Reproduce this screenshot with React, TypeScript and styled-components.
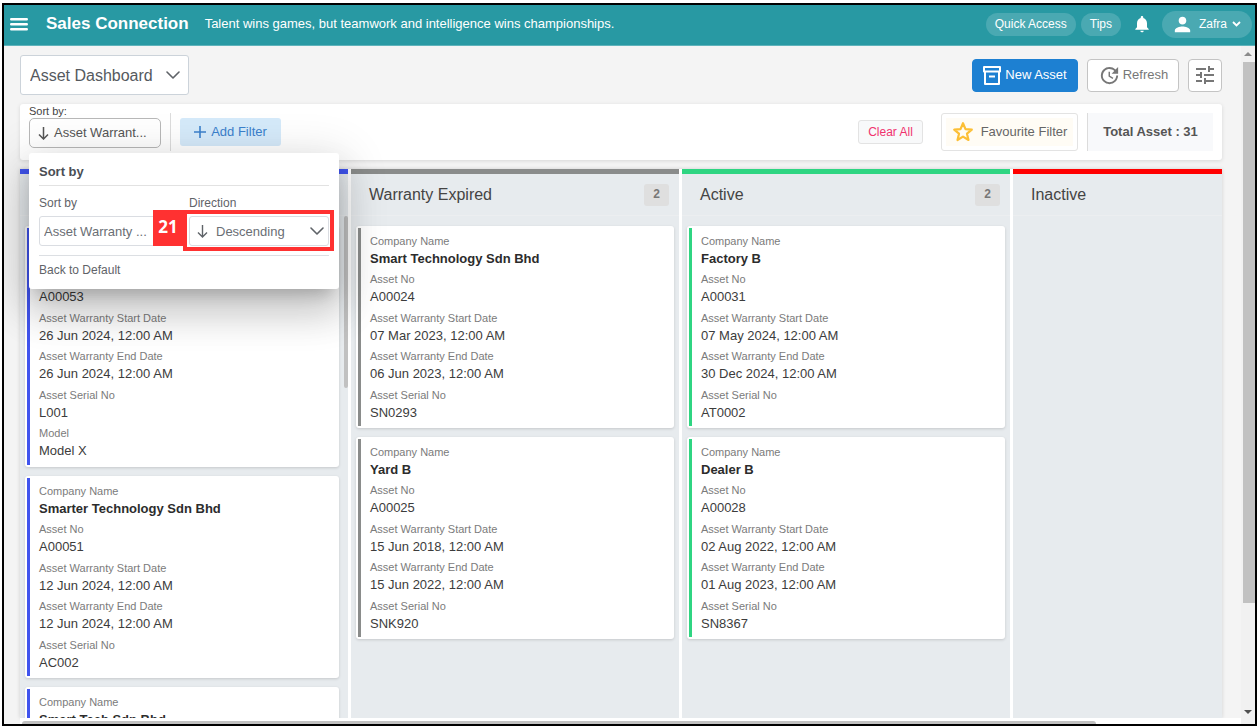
import React from "react";
import styled, { createGlobalStyle } from "styled-components";
import { MdNotifications, MdPerson, MdTune, MdUpdate } from "react-icons/md";

const GlobalStyle = createGlobalStyle`
  * { box-sizing: border-box; }
  body {
    margin: 0;
    background: #fff;
    font-family: "Liberation Sans", Arial, sans-serif;
    color: #444;
  }
  button, select { font: inherit; color: inherit; cursor: pointer; margin: 0; }
  h1, h2, h3, p, dl, dt, dd, ul { margin: 0; padding: 0; font-weight: normal; }
`;

const Page = styled.div`
  height: 100vh;
  padding: 3px 1px 1px 2px;
`;

const Frame = styled.div`
  height: 100%;
  border: 2px solid #000;
  display: flex;
  flex-direction: column;
  overflow: hidden;
  background: #f4f4f4;
`;

const Header = styled.header`
  flex: none;
  height: 41px;
  padding: 0 3px 2px 5px;
  display: flex;
  align-items: center;
  background: #2899a3;
  border-bottom: 1px solid #5fb3bb;
  color: #fff;
`;

const MenuButton = styled.button`
  width: 20px;
  height: 20px;
  padding: 0;
  border: 0;
  background: none;
  display: flex;
  align-items: center;
  justify-content: center;
`;

const Brand = styled.h1`
  margin-left: 17px;
  font-size: 17px;
  line-height: 24px;
  font-weight: bold;
`;

const Quote = styled.p`
  margin-left: 16px;
  flex: 1;
  font-size: 13px;
  line-height: 20px;
`;

const Pill = styled.button`
  height: 23px;
  margin-left: 5px;
  padding: 0 9px;
  border: 0;
  border-radius: 12px;
  background: #4aa9b2;
  color: #fff;
  font-size: 12px;
  line-height: 16px;
`;

const BellButton = styled.button`
  margin: 0 10px 0 11px;
  padding: 0;
  width: 20px;
  height: 24px;
  border: 0;
  background: none;
  color: #fff;
  display: flex;
  align-items: center;
  justify-content: center;
`;

const UserButton = styled.button`
  height: 27px;
  padding: 0 11px 0 9px;
  border: 0;
  border-radius: 14px;
  background: #4aa9b2;
  color: #fff;
  font-size: 12px;
  line-height: 16px;
  display: flex;
  align-items: center;
  gap: 5px;
`;

const Body = styled.div`
  flex: 1;
  min-height: 0;
  display: flex;
`;

const Main = styled.main`
  flex: 1;
  min-width: 0;
  padding: 9px 0 0 16px;
  display: flex;
  flex-direction: column;
`;

const Toolbar = styled.div`
  margin-right: 19px;
  display: flex;
  align-items: center;
  gap: 9px;
`;

const Spacer = styled.div`
  flex: 1;
`;

const SelectBox = styled.div`
  position: relative;
  display: flex;
  align-items: center;
  color: #5f6368;
  > svg { position: absolute; pointer-events: none; }
`;

const Chevron = styled.svg<{ $right: number }>`
  right: ${(p) => p.$right}px;
`;

const LeadArrow = styled.svg`
  left: 8px;
`;

const BoardSelect = styled.select`
  appearance: none;
  width: 169px;
  height: 40px;
  padding: 0 30px 0 9px;
  border: 1px solid #ccd3da;
  border-radius: 3px;
  background: #fff;
  color: #55595e;
  font-size: 16px;
`;

const ToolButton = styled.button<{ $primary?: boolean; $square?: boolean }>`
  height: 33px;
  width: ${(p) => (p.$square ? 34 : p.$primary ? 106 : 92)}px;
  padding: 0;
  border: 1px solid ${(p) => (p.$primary ? "#1d80d2" : "#c4c4c4")};
  border-radius: 4px;
  background: ${(p) => (p.$primary ? "#1d80d2" : "#fff")};
  color: ${(p) => (p.$primary ? "#fff" : "#777")};
  font-size: 13px;
  line-height: 20px;
  display: flex;
  align-items: center;
  justify-content: center;
  gap: ${(p) => (p.$primary ? 4 : 2)}px;
`;

const FilterBar = styled.div`
  position: relative;
  margin: 9px 19px 0 0;
  height: 56px;
  padding: 0 9px;
  display: flex;
  align-items: center;
  background: #fff;
  border-radius: 3px;
  box-shadow: 0 1px 4px rgba(0, 0, 0, 0.12);
`;

const SortGroup = styled.div`
  display: flex;
  flex-direction: column;
  padding-bottom: 12px;
`;

const SortCaption = styled.span`
  font-size: 11px;
  line-height: 14px;
`;

const SortButton = styled.button`
  width: 132px;
  height: 30px;
  padding: 0 0 0 8px;
  border: 1px solid #b8b8b8;
  border-radius: 5px;
  background: #fff;
  color: #555;
  font-size: 13px;
  line-height: 20px;
  display: flex;
  align-items: center;
  gap: 5px;
`;

const Divider = styled.div`
  width: 1px;
  height: 38px;
  margin: 0 9px;
  background: #dcdcdc;
`;

const AddFilter = styled.button`
  width: 101px;
  height: 28px;
  padding: 0;
  border: 0;
  border-radius: 3px;
  background: #d5eafa;
  color: #3b80cc;
  font-size: 13px;
  line-height: 20px;
  display: flex;
  align-items: center;
  justify-content: center;
  gap: 5px;
`;

const ClearButton = styled.button`
  width: 65px;
  height: 24px;
  padding: 0;
  border: 1px solid #e3e3e3;
  border-radius: 3px;
  background: #f8f9fa;
  color: #f0326e;
  font-size: 12px;
`;

const FavouriteButton = styled.button`
  width: 137px;
  height: 38px;
  margin: 0 9px 0 18px;
  padding: 0 3px;
  border: 1px solid #e3e3e3;
  border-radius: 3px;
  background: #fffcf5;
  color: #666;
  box-shadow: inset 0 0 0 4px #fff;
  font-size: 13px;
  line-height: 20px;
  display: flex;
  align-items: center;
  justify-content: center;
  gap: 7px;
`;

const Total = styled.div`
  width: 126px;
  height: 38px;
  border-left: 1px solid #dcdcdc;
  background: #f8f9fb;
  color: #555;
  font-size: 13px;
  line-height: 38px;
  font-weight: bold;
  text-align: center;
`;

const Popup = styled.section`
  position: absolute;
  z-index: 2;
  top: 49px;
  left: 9px;
  width: 310px;
  height: 136px;
  padding: 8px 10px;
  border-radius: 3px;
  background: #fff;
  color: #5f6368;
  font-size: 12px;
  box-shadow: 0 11px 15px -7px rgba(0, 0, 0, 0.2),
    0 24px 38px 3px rgba(0, 0, 0, 0.14), 0 9px 46px 8px rgba(0, 0, 0, 0.12);
`;

const PopupTitle = styled.h2`
  padding-bottom: 3px;
  border-bottom: 1px solid #e2e2e2;
  color: #4a4e54;
  font-size: 13px;
  line-height: 21px;
  font-weight: bold;
`;

const PopupRow = styled.div`
  display: flex;
  gap: 10px;
  padding: 9px 0;
  border-bottom: 1px solid #dcdfe3;
`;

const PopupField = styled.div`
  width: 140px;
  > label { display: block; line-height: 16px; margin-bottom: 5px; }
`;

const PopupSelect = styled.select<{ $icon?: boolean }>`
  appearance: none;
  width: 100%;
  height: 30px;
  padding: 0 0 0 ${(p) => (p.$icon ? 26 : 4)}px;
  border: 1px solid #dadde2;
  border-radius: 3px;
  background: #fff;
  color: #6a6e74;
  font-size: 13px;
`;

const BackButton = styled.button`
  display: block;
  padding: 0;
  margin-top: 6px;
  border: 0;
  background: none;
  font-size: 12px;
  line-height: 16px;
`;

const CalloutFrame = styled.div`
  position: absolute;
  top: 57px;
  right: 5px;
  width: 151px;
  height: 41px;
  border: 4px solid #ff3131;
  pointer-events: none;
`;

const CalloutNumber = styled.div`
  position: absolute;
  top: 57px;
  left: 124px;
  width: 30px;
  height: 36px;
  background: #ff3131;
  color: #fff;
  font-family: "Open Sans", sans-serif;
  font-size: 17px;
  line-height: 34px;
  font-weight: bold;
  text-align: center;
`;

const Board = styled.div`
  flex: 1;
  min-height: 0;
  margin: 9px 19px 0 0;
  display: flex;
  gap: 3px;
  overflow: hidden;
  background: #fff;
  box-shadow: 0 0 4px rgba(0, 0, 0, 0.15);
`;

const Column = styled.section<{ $accent: string }>`
  flex: 0 0 328px;
  border-top: 5px solid ${(p) => p.$accent};
  background: #e7ebee;
  display: flex;
  flex-direction: column;
`;

const ColumnHead = styled.div`
  flex: none;
  height: 42px;
  padding: 0 10px 0 18px;
  border-bottom: 1px solid #eceef0;
  display: flex;
  align-items: center;
  justify-content: space-between;
`;

const ColumnTitle = styled.h2`
  font-size: 16px;
  line-height: 22px;
`;

const Count = styled.span`
  width: 25px;
  height: 22px;
  border-radius: 3px;
  background: #dfdfdf;
  color: #777;
  font-size: 12px;
  line-height: 20px;
  font-weight: bold;
  text-align: center;
`;

const ColumnBody = styled.div`
  flex: 1;
  min-height: 0;
  display: flex;
`;

const CardList = styled.div`
  flex: 1;
  min-width: 0;
  padding: 10px 5px 0;
  overflow: hidden;
  display: flex;
  flex-direction: column;
  gap: 9px;
`;

const ColumnThumb = styled.div`
  width: 4px;
  height: 172px;
  border-radius: 2px;
  background: #c1c1c1;
`;

const Card = styled.article<{ $accent: string }>`
  flex: none;
  padding: 2px;
  border-radius: 3px;
  background: #fff;
  box-shadow: 0 1px 3px rgba(0, 0, 0, 0.15);
  > dl { border-left: 3px solid ${(p) => p.$accent}; padding: 4px 0 2px 9px; }
`;

const Field = styled.div`
  padding-bottom: 2px;
  &:nth-child(even) { padding-bottom: 3px; }
`;

const FieldLabel = styled.dt`
  min-height: 18px;
  font-size: 11px;
  line-height: 18px;
  color: #7b7b7b;
`;

const FieldValue = styled.dd<{ $strong: boolean }>`
  min-height: 18px;
  font-size: 13px;
  line-height: 18px;
  color: ${(p) => (p.$strong ? "#2c2c2c" : "#3c3c3c")};
  font-weight: ${(p) => (p.$strong ? "bold" : "normal")};
`;

const HScroll = styled.div`
  flex: none;
  height: 6px;
  padding-top: 3px;
  background: #fff;
`;

const HThumb = styled.div`
  width: 88%;
  height: 3px;
  margin-left: 2px;
  border-radius: 3px 3px 0 0;
  background: #c1c1c1;
`;

const PageScroll = styled.div`
  width: 14px;
  padding: 6px 0 10px;
  display: flex;
  flex-direction: column;
  align-items: center;
  background: #f1f1f1;
`;

const PageThumb = styled.div`
  width: 12px;
  height: 541px;
  margin: 6px 0 auto;
  align-self: flex-end;
  background: #c1c1c1;
`;

type Row = [string, string];
interface ColumnData {
  title: string;
  accent: string;
  count?: number;
  scroll?: boolean;
  cards: Row[][];
}

const asset = (company: string, no: string, start: string, end: string, serial: string): Row[] => [
  ["Company Name", company],
  ["Asset No", no],
  ["Asset Warranty Start Date", start],
  ["Asset Warranty End Date", end],
  ["Asset Serial No", serial],
];

const columns: ColumnData[] = [
  {
    title: "",
    accent: "#4054ee",
    scroll: true,
    cards: [
      [
        ["", ""],
        ["", "A00053"],
        ["Asset Warranty Start Date", "26 Jun 2024, 12:00 AM"],
        ["Asset Warranty End Date", "26 Jun 2024, 12:00 AM"],
        ["Asset Serial No", "L001"],
        ["Model", "Model X"],
      ],
      asset("Smarter Technology Sdn Bhd", "A00051", "12 Jun 2024, 12:00 AM", "12 Jun 2024, 12:00 AM", "AC002"),
      [["Company Name", "Smart Tech Sdn Bhd"]],
    ],
  },
  {
    title: "Warranty Expired",
    accent: "#8a8c8b",
    count: 2,
    cards: [
      asset("Smart Technology Sdn Bhd", "A00024", "07 Mar 2023, 12:00 AM", "06 Jun 2023, 12:00 AM", "SN0293"),
      asset("Yard B", "A00025", "15 Jun 2018, 12:00 AM", "15 Jun 2022, 12:00 AM", "SNK920"),
    ],
  },
  {
    title: "Active",
    accent: "#2fd582",
    count: 2,
    cards: [
      asset("Factory B", "A00031", "07 May 2024, 12:00 AM", "30 Dec 2024, 12:00 AM", "AT0002"),
      asset("Dealer B", "A00028", "02 Aug 2022, 12:00 AM", "01 Aug 2023, 12:00 AM", "SN8367"),
    ],
  },
  { title: "Inactive", accent: "#ff0000", cards: [] },
];

const ChevronDown = ({ right }: { right: number }) => (
  <Chevron $right={right} width="14" height="8" viewBox="0 0 14 8" fill="none" stroke="currentColor" strokeWidth="1.6" aria-hidden="true">
    <path d="M1 1l6 6 6-6" strokeLinecap="round" strokeLinejoin="round" />
  </Chevron>
);

const arrowPath = "M5.5 1v12M1 8.5L5.5 13 10 8.5";

export default function App() {
  return (
    <Page>
      <GlobalStyle />
      <Frame>
        <Header>
          <MenuButton aria-label="Menu">
            <svg width="18" height="14" viewBox="0 0 18 14" stroke="#fff" strokeWidth="2.4" strokeLinecap="round">
              <path d="M1.200 2.200h15.600M1.200 7.200h15.600M1.200 12.200h15.600" />
            </svg>
          </MenuButton>
          <Brand>Sales Connection</Brand>
          <Quote>Talent wins games, but teamwork and intelligence wins championships.</Quote>
          <Pill>Quick Access</Pill>
          <Pill>Tips</Pill>
          <BellButton aria-label="Notifications"><MdNotifications size={24} /></BellButton>
          <UserButton>
            <MdPerson size={23} />
            Zafra
            <svg width="9" height="6" viewBox="0 0 9 6" fill="none" stroke="#fff" strokeWidth="1.8">
              <path d="M1 1l3.5 3.5L8 1" />
            </svg>
          </UserButton>
        </Header>
        <Body>
          <Main>
            <Toolbar>
              <SelectBox>
                <BoardSelect aria-label="Dashboard"><option>Asset Dashboard</option></BoardSelect>
                <ChevronDown right={9} />
              </SelectBox>
              <Spacer />
              <ToolButton $primary>
                <svg width="18" height="19" viewBox="0 0 18 19" fill="none" stroke="#fff" strokeWidth="2" strokeLinejoin="round">
                  <path d="M1 1h16v4.500H1zM2 5.500V18h14V5.500M6 10.500h6" />
                </svg>
                New Asset
              </ToolButton>
              <ToolButton><MdUpdate size={23} />Refresh</ToolButton>
              <ToolButton $square aria-label="Settings"><MdTune size={24} /></ToolButton>
            </Toolbar>
            <FilterBar>
              <SortGroup>
                <SortCaption>Sort by:</SortCaption>
                <SortButton>
                  <svg width="11" height="14" viewBox="0 0 11 14" fill="none" stroke="currentColor" strokeWidth="1.5">
                    <path d={arrowPath} />
                  </svg>
                  Asset Warrant...
                </SortButton>
              </SortGroup>
              <Divider />
              <AddFilter>
                <svg width="12" height="12" viewBox="0 0 12 12" stroke="currentColor" strokeWidth="1.6">
                  <path d="M6 0v12M0 6h12" />
                </svg>
                Add Filter
              </AddFilter>
              <Spacer />
              <ClearButton>Clear All</ClearButton>
              <FavouriteButton>
                <svg width="22" height="22" viewBox="0 0 22 22" fill="none" stroke="#fcbf35" strokeWidth="2.2" strokeLinejoin="round">
                  <path d="M11 2.2l2.5 5.9 6.3.5-4.8 4.1 1.5 6.3L11 15.6 5.5 19l1.5-6.3L2.2 8.6l6.3-.5z" />
                </svg>
                Favourite Filter
              </FavouriteButton>
              <Total>Total Asset : 31</Total>
              <Popup>
                <PopupTitle>Sort by</PopupTitle>
                <PopupRow>
                  <PopupField>
                    <label htmlFor="sort-field">Sort by</label>
                    <SelectBox>
                      <PopupSelect id="sort-field"><option>Asset Warranty ...</option></PopupSelect>
                    </SelectBox>
                  </PopupField>
                  <PopupField>
                    <label htmlFor="sort-direction">Direction</label>
                    <SelectBox>
                      <PopupSelect id="sort-direction" $icon><option>Descending</option></PopupSelect>
                      <LeadArrow width="11" height="14" viewBox="0 0 11 14" fill="none" stroke="currentColor" strokeWidth="1.4">
                        <path d={arrowPath} />
                      </LeadArrow>
                      <ChevronDown right={5} />
                    </SelectBox>
                  </PopupField>
                </PopupRow>
                <BackButton>Back to Default</BackButton>
                <CalloutFrame />
                <CalloutNumber>21</CalloutNumber>
              </Popup>
            </FilterBar>
            <Board>
              {columns.map((c, k) => (
                <Column key={k} $accent={c.accent}>
                  <ColumnHead>
                    <ColumnTitle>{c.title}</ColumnTitle>
                    {c.count && <Count>{c.count}</Count>}
                  </ColumnHead>
                  <ColumnBody>
                    <CardList>
                      {c.cards.map((rows, i) => (
                        <Card key={i} $accent={c.accent}>
                          <dl>
                            {rows.map(([label, value], j) => (
                              <Field key={j}>
                                <FieldLabel>{label}</FieldLabel>
                                <FieldValue $strong={j === 0}>{value}</FieldValue>
                              </Field>
                            ))}
                          </dl>
                        </Card>
                      ))}
                    </CardList>
                    {c.scroll && <ColumnThumb />}
                  </ColumnBody>
                </Column>
              ))}
            </Board>
            <HScroll><HThumb /></HScroll>
          </Main>
          <PageScroll aria-hidden="true">
            <svg width="8" height="4" viewBox="0 0 8 4"><path d="M0 4l4-4 4 4z" fill="#8a8a8a" /></svg>
            <PageThumb />
            <svg width="8" height="4" viewBox="0 0 8 4"><path d="M0 0h8L4 4z" fill="#505050" /></svg>
          </PageScroll>
        </Body>
      </Frame>
    </Page>
  );
}
